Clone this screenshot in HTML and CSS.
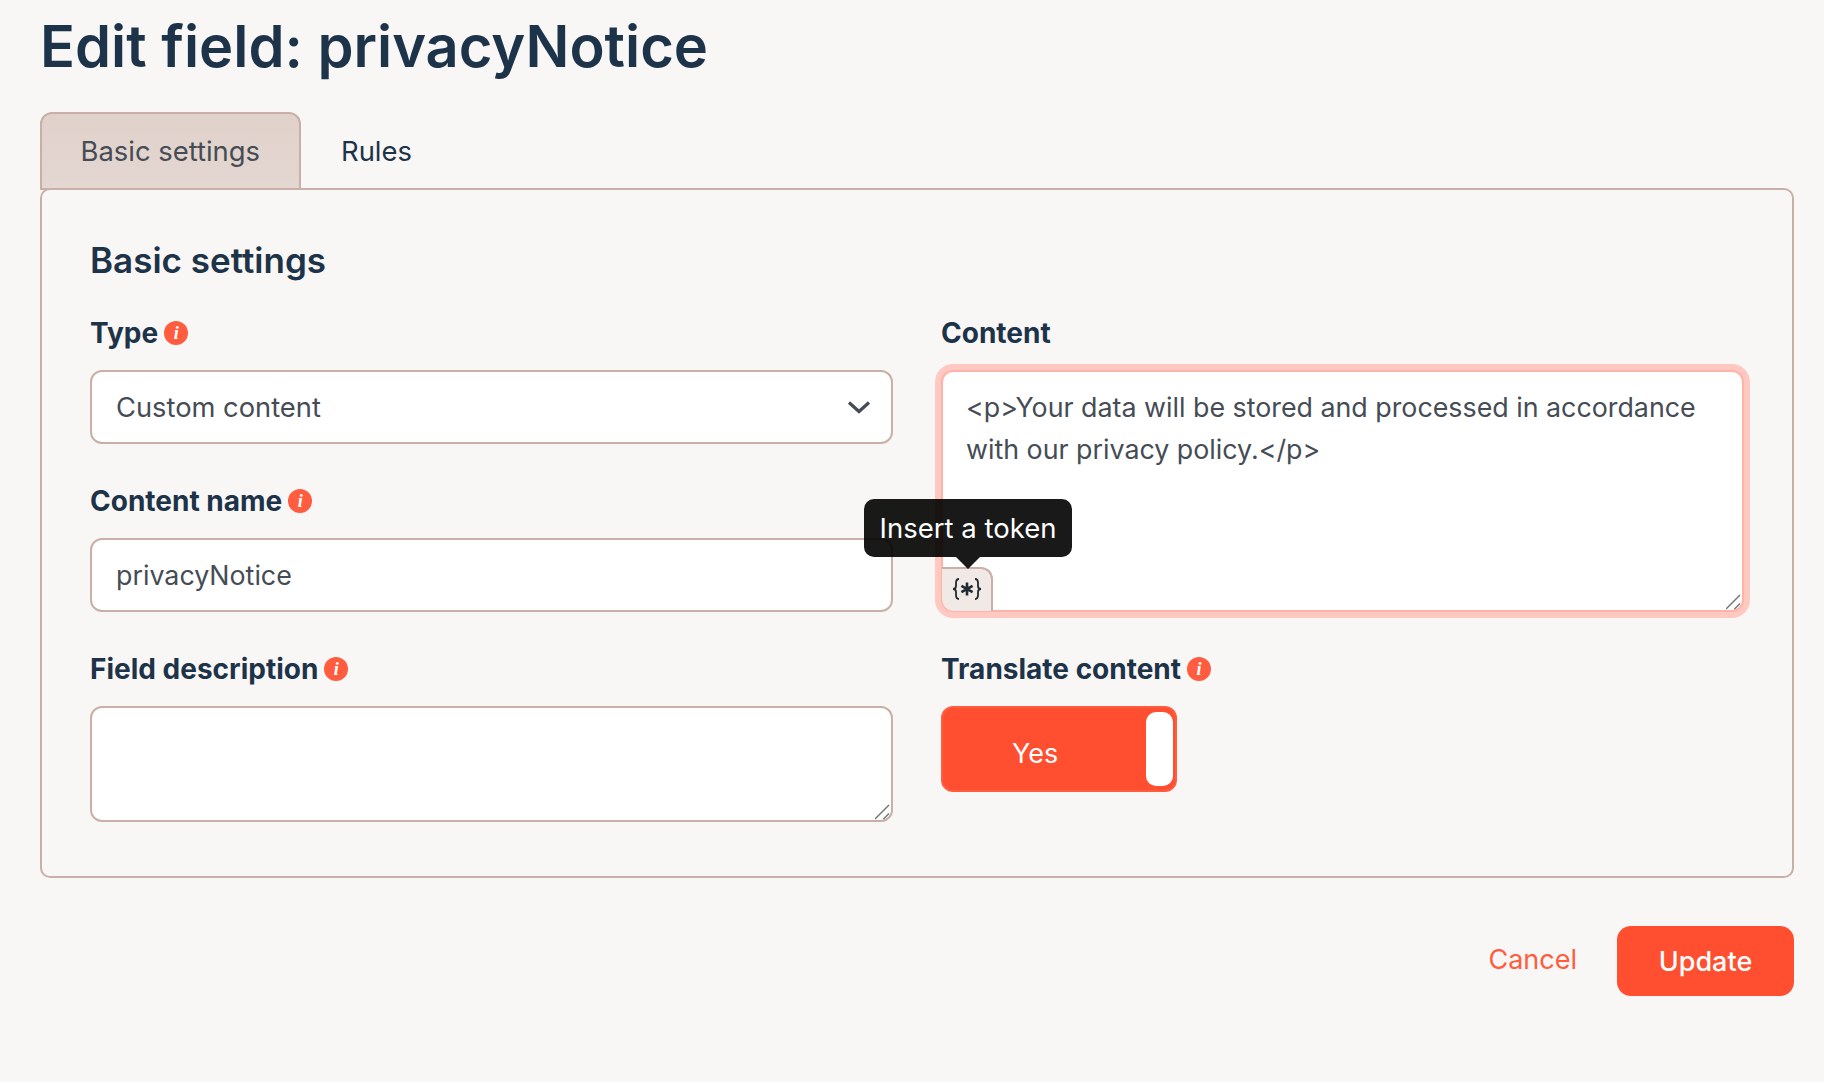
FILE: index.html
```html
<!DOCTYPE html>
<html lang="en">
<head>
    <meta charset="UTF-8">
    <title>Edit field: privacyNotice</title>
    <link rel="stylesheet" href="styles.css">
</head>
<body>
    <h1 class="page-title">Edit field: privacyNotice</h1>

    <div class="tabs">
        <div class="tab tab-active">Basic settings</div>
        <div class="tab">Rules</div>
    </div>

    <div class="panel">
        <h2 class="panel-title">Basic settings</h2>
        <div class="columns">
            <div class="column">
                <div class="field">
                    <div class="field-label">Type <span class="info">i</span></div>
                    <div class="control select-box">
                        <span>Custom content</span>
                        <svg class="chevron" width="24" height="14" viewBox="0 0 24 14"><path d="M2 2.5 L12 11.5 L22 2.5" fill="none" stroke="#454c55" stroke-width="3.2"/></svg>
                    </div>
                </div>
                <div class="field">
                    <div class="field-label">Content name <span class="info">i</span></div>
                    <input class="control text-input" type="text" value="privacyNotice">
                </div>
                <div class="field">
                    <div class="field-label">Field description <span class="info">i</span></div>
                    <div class="area-wrap">
                        <textarea class="control text-area"></textarea>
                        <svg class="resize-grip" width="16" height="16" viewBox="0 0 16 16"><path d="M0 15L14 1M8.5 15L14 9.5" stroke="#777" stroke-width="1.5" fill="none"/></svg>
                    </div>
                </div>
            </div>
            <div class="column">
                <div class="field">
                    <div class="field-label">Content</div>
                    <div class="area-wrap">
                        <textarea class="control text-area editor-area">&lt;p&gt;Your data will be stored and processed in accordance with our privacy policy.&lt;/p&gt;</textarea>
                        <svg class="resize-grip" width="16" height="16" viewBox="0 0 16 16"><path d="M0 15L14 1M8.5 15L14 9.5" stroke="#777" stroke-width="1.5" fill="none"/></svg>
                        <div class="token-btn">
                            <svg width="30" height="22" viewBox="0 0 30 22" fill="none" stroke="#1f2a33">
                                <path d="M7 1C4.5 1 4 2.5 4 5V8C4 10 2.5 11 1 11C2.5 11 4 12 4 14V17C4 19.5 4.5 21 7 21" stroke-width="1.8"/>
                                <path d="M23 1C25.5 1 26 2.5 26 5V8C26 10 27.5 11 29 11C27.5 11 26 12 26 14V17C26 19.5 25.5 21 23 21" stroke-width="1.8"/>
                                <path d="M15 4.5V17.5M9.4 7.8L20.6 14.2M20.6 7.8L9.4 14.2" stroke-width="2.6"/>
                            </svg>
                        </div>
                        <div class="tooltip">Insert a token</div>
                    </div>
                </div>
                <div class="field">
                    <div class="field-label">Translate content <span class="info">i</span></div>
                    <div class="toggle">
                        <span class="toggle-text">Yes</span>
                        <span class="toggle-knob"></span>
                    </div>
                </div>
            </div>
        </div>
    </div>

    <div class="actions">
        <a class="cancel-link">Cancel</a>
        <button class="update-btn">Update</button>
    </div>
</body>
</html>
```

FILE: styles.css
```css
* {
    box-sizing: border-box;
}
body {
    margin: 0;
    padding: 0 30px 86px 40px;
    background-color: #f9f7f5;
    color: #1d3349;
    font-family: Inter, "Noto Sans", sans-serif;
}
.page-title {
    margin: 0;
    height: 112px;
    padding-top: 8px;
    font-size: 57.8px;
    line-height: 76px;
    font-weight: 600;
}
.tabs {
    display: flex;
    margin-bottom: -2px;
}
.tab {
    padding: 0 38.5px;
    height: 78px;
    line-height: 74px;
    font-size: 27.4px;
    border: 2px solid transparent;
}
.tab-active {
    color: #454c55;
    border-color: #c9b0a6;
    border-radius: 12px 12px 0 0;
    background: linear-gradient(#e0d1cb, #e4d6d0);
}
.panel {
    position: relative;
    height: 690px;
    padding: 42px 48px 0 48px;
    background-color: #f9f7f5;
    border: 2px solid #c9b0a6;
    border-radius: 10px;
}
.panel-title {
    margin: 0 0 23px;
    font-size: 35px;
    line-height: 56px;
    font-weight: 600;
}
.columns {
    display: grid;
    grid-template-columns: 1fr 1fr;
    gap: 48px;
}
.field {
    margin-bottom: 35px;
}
.field-label {
    display: flex;
    align-items: center;
    gap: 6px;
    height: 44px;
    margin-bottom: 15px;
    font-size: 28px;
    font-weight: 700;
}
.info {
    display: inline-block;
    width: 24px;
    height: 24px;
    border-radius: 50%;
    background-color: #ff5c40;
    color: #fff;
    font-family: "Liberation Serif", serif;
    font-size: 18px;
    font-style: italic;
    font-weight: 700;
    line-height: 24px;
    text-align: center;
}
.control {
    display: block;
    width: 100%;
    height: 74px;
    padding: 0 24px;
    background-color: #fff;
    border: 2px solid #c9b0a6;
    border-radius: 12px;
    color: #454c55;
    font-family: Inter, "Noto Sans", sans-serif;
    font-size: 26.8px;
}
.select-box {
    display: flex;
    align-items: center;
    justify-content: space-between;
    font-size: 27.3px;
}
.chevron {
    margin-right: -4px;
}
.text-area {
    height: 116px;
    padding: 14px 23px;
    line-height: 42px;
    outline: none;
    resize: none;
}
.area-wrap {
    position: relative;
}
.resize-grip {
    position: absolute;
    right: 2px;
    bottom: 2px;
}
.editor-area {
    height: 242px;
    border-color: #ffb3a8;
    box-shadow: 0 0 0 6px #ffc9c2;
}
.token-btn {
    position: absolute;
    left: 1px;
    bottom: 1px;
    display: flex;
    align-items: center;
    justify-content: center;
    width: 51px;
    height: 44px;
    padding-bottom: 3px;
    background-color: #f0e9e6;
    border: 2px solid #c9b0a6;
    border-width: 2px 2px 0 0;
    border-radius: 0 12px 0 12px;
}
.tooltip {
    position: absolute;
    left: -77px;
    top: 129px;
    width: 208px;
    height: 58px;
    background-color: rgba(0, 0, 0, 0.9);
    border-radius: 10px;
    color: #fff;
    font-size: 27.5px;
    line-height: 58px;
    text-align: center;
}
.tooltip::after {
    content: "";
    position: absolute;
    left: 92px;
    top: 58px;
    border: 12px solid transparent;
    border-top-color: rgba(0, 0, 0, 0.9);
    border-bottom-width: 0;
}
.toggle {
    display: flex;
    align-items: center;
    justify-content: flex-end;
    position: relative;
    width: 236px;
    height: 86px;
    padding-right: 2px;
    background-color: #ff4f30;
    border: 2px solid #ff5c40;
    border-radius: 12px;
    color: #fff;
    font-size: 27px;
}
.toggle-text {
    position: absolute;
    left: 69px;
    top: 29px;
}
.toggle-knob {
    width: 27px;
    height: 74px;
    background-color: #fff;
    border-radius: 10px;
}
.actions {
    display: flex;
    align-items: center;
    justify-content: flex-end;
    gap: 40px;
    margin-top: 48px;
}
.cancel-link {
    color: #ff5c40;
    font-size: 27px;
    margin-bottom: 4px;
}
.update-btn {
    width: 177px;
    height: 70px;
    background-color: #ff4f30;
    border: none;
    border-radius: 14px;
    color: #fff;
    font-family: Inter, "Noto Sans", sans-serif;
    font-size: 27px;
    font-weight: 500;
}
```
